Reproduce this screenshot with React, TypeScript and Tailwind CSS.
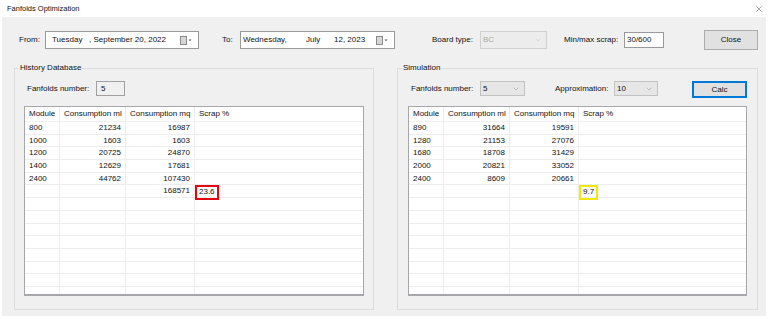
import { ChevronDown, X } from "lucide-react";

type Row = { module: string; ml: string; mq: string; scrap?: string };

const historyRows: Row[] = [
  { module: "800", ml: "21234", mq: "16987" },
  { module: "1000", ml: "1603", mq: "1603" },
  { module: "1200", ml: "20725", mq: "24870" },
  { module: "1400", ml: "12629", mq: "17681" },
  { module: "2400", ml: "44762", mq: "107430" },
  { module: "", ml: "", mq: "168571", scrap: "23.6" },
];

const simulationRows: Row[] = [
  { module: "890", ml: "31664", mq: "19591" },
  { module: "1280", ml: "21153", mq: "27076" },
  { module: "1680", ml: "18708", mq: "31429" },
  { module: "2000", ml: "20821", mq: "33052" },
  { module: "2400", ml: "8609", mq: "20661" },
  { module: "", ml: "", mq: "", scrap: "9.7" },
];

const DateIcon = () => (
  <svg width="12" height="9" viewBox="0 0 12 9" className="shrink-0">
    <rect x="0.5" y="0.5" width="6" height="8" fill="#d6d6d6" stroke="#8a8a8a" />
    <path d="M8.5 3.5 L11.5 3.5 L10 5.2 Z" fill="#555" />
  </svg>
);

const DateBox = ({ w, children }: { w: string; children: React.ReactNode }) => (
  <div className={`${w} h-[18px] bg-white border border-[#9a9a9a] flex items-center pl-[6px] pr-[6px]`}>
    <div className="flex-1 flex items-center whitespace-pre">{children}</div>
    <DateIcon />
  </div>
);

const Select = ({
  w,
  value,
  disabled,
}: {
  w: string;
  value: string;
  disabled?: boolean;
}) => (
  <div
    className={`${w} h-[15px] border flex items-center pl-[2px] pr-[4px] ${
      disabled
        ? "bg-[#ececec] border-[#d0d0d0] text-[#a8a8a8]"
        : "bg-[#e6e6e6] border-[#c2c2c2]"
    }`}
  >
    <span className="flex-1">{value}</span>
    <ChevronDown size={8} strokeWidth={1.2} color={disabled ? "#bdbdbd" : "#7a7a7a"} />
  </div>
);

const DataTable = ({ rows, highlight }: { rows: Row[]; highlight: string }) => {
  const blank = Array.from({ length: 8 }, () => ({ module: "", ml: "", mq: "" }) as Row);
  const all = [...rows, ...blank];
  return (
    <div className="h-[190px] bg-white border border-[#a7a7ab] border-b-2 overflow-hidden">
      <div className="flex h-[15px] items-center border-b border-[#f0f0f0]">
        <div className="w-[35px] h-full pl-[4px] flex items-center border-r border-[#ececec]">Module</div>
        <div className="w-[66px] h-full pl-[4px] flex items-center border-r border-[#ececec]">Consumption ml</div>
        <div className="w-[69px] h-full pl-[4px] flex items-center border-r border-[#ececec]">Consumption mq</div>
        <div className="flex-1 h-full pl-[4px] flex items-center">Scrap %</div>
      </div>
      {all.map((r, i) => (
        <div key={i} className="flex h-[12.7px] border-b border-[#ededed]">
          <div className="w-[35px] pl-[4px] flex items-center border-r border-[#ededed]">{r.module}</div>
          <div className="w-[66px] pr-[4px] flex items-center justify-end border-r border-[#ededed]">{r.ml}</div>
          <div className="w-[69px] pr-[4px] flex items-center justify-end border-r border-[#ededed]">{r.mq}</div>
          <div className="flex-1 flex items-center">
            {r.scrap && (
              <span
                className={`relative top-[1px] h-[15px] px-[2px] border-2 ${highlight} flex items-center leading-none`}
              >
                {r.scrap}
              </span>
            )}
          </div>
        </div>
      ))}
    </div>
  );
};

export default function App() {
  return (
    <div className="w-[768px] h-[319px] bg-white font-['Liberation_Sans',Arial,sans-serif] text-[8px] text-[#111] leading-none">
      <div className="h-[17px] flex items-center justify-between pl-[7px] pr-[4px] text-[7.5px]">
        <span>Fanfolds Optimization</span>
        <X size={10} strokeWidth={1} color="#333" />
      </div>

      <div className="mx-[2px] h-[299px] bg-[#f0f0f0] pt-[13px]">
        <div className="flex items-center h-[20px]">
          <span className="ml-[17px] w-[26px]">From:</span>
          <DateBox w="w-[154px]">
            <span>Tuesday   , September 20, 2022</span>
          </DateBox>
          <span className="ml-[23px] w-[18px]">To:</span>
          <DateBox w="w-[155px]">
            <span className="-ml-[4px] w-[63px]">Wednesday,</span>
            <span className="w-[28px]">July</span>
            <span>12, 2023</span>
          </DateBox>
          <span className="ml-[37px] w-[48px]">Board type:</span>
          <Select w="w-[67px] h-[18px]" value="BC" disabled />
          <span className="ml-[17px] w-[60px]">Min/max scrap:</span>
          <div className="w-[40px] h-[16px] bg-white border border-[#9a9a9a] flex items-center pl-[2px]">
            30/600
          </div>
          <button className="ml-[40px] w-[54px] h-[20px] bg-[#e1e1e1] border border-[#adadad] flex items-center justify-center">
            Close
          </button>
        </div>

        <div className="flex mt-[13px] ml-[12px] gap-[23px]">
          <fieldset className="w-[360px] h-[247px] border border-[#dcdcdc] px-[9px] pt-[8px]">
            <legend className="-ml-[5px] px-[1px] leading-[10px]">History Database</legend>
            <div className="flex items-center h-[15px]">
              <span className="ml-[3px] w-[69px]">Fanfolds number:</span>
              <div className="w-[29px] h-[15px] border border-[#a0a0a0] flex items-center pl-[4px]">5</div>
            </div>
            <div className="mt-[10px]">
              <DataTable rows={historyRows} highlight="border-[#e30613]" />
            </div>
          </fieldset>

          <fieldset className="w-[361px] h-[247px] border border-[#dcdcdc] px-[10px] pt-[8px]">
            <legend className="-ml-[6px] px-[1px] leading-[10px]">Simulation</legend>
            <div className="flex items-start h-[17px]">
              <span className="ml-[3px] w-[69px] h-[15px] flex items-center">Fanfolds number:</span>
              <Select w="w-[45px]" value="5" />
              <span className="ml-[30px] w-[59px] h-[15px] flex items-center">Approximation:</span>
              <Select w="w-[44px]" value="10" />
              <button className="ml-[34px] w-[55px] h-[17px] bg-[#e1e1e1] border-2 border-[#0078d7] flex items-center justify-center">
                Calc
              </button>
            </div>
            <div className="mt-[8px]">
              <DataTable rows={simulationRows} highlight="border-[#f5e800]" />
            </div>
          </fieldset>
        </div>
      </div>
    </div>
  );
}
